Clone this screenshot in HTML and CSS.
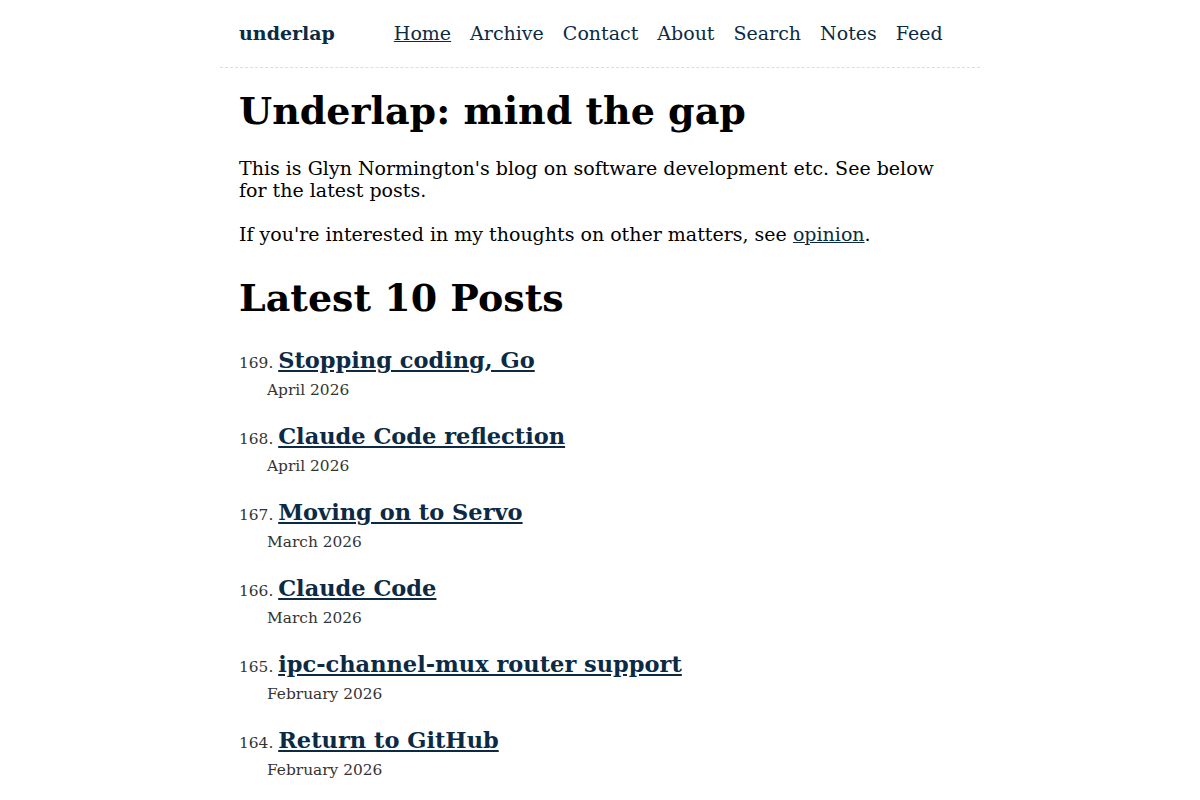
FILE: index.html
```html
<!DOCTYPE html>
<html lang="en">
<head>
    <meta charset="UTF-8">
    <meta name="viewport" content="width=device-width, initial-scale=1.0">
    <title>Underlap: mind the gap</title>
    <link rel="stylesheet" href="styles.css">
</head>
<body>
    <div class="page">
        <header class="site-header">
            <a class="brand" href="#">underlap</a>
            <nav class="site-nav">
                <a class="current" href="#">Home</a>
                <a href="#">Archive</a>
                <a href="#">Contact</a>
                <a href="#">About</a>
                <a href="#">Search</a>
                <a href="#">Notes</a>
                <a href="#">Feed</a>
            </nav>
        </header>

        <main class="content">
            <h1>Underlap: mind the gap</h1>
            <p>This is Glyn Normington's blog on software development etc. See below for the latest posts.</p>
            <p>If you're interested in my thoughts on other matters, see <a href="#">opinion</a>.</p>

            <h2>Latest 10 Posts</h2>
            <ol class="posts" reversed start="169">
                <li>
                    <a class="post-title" href="#">Stopping coding, Go</a>
                    <div class="post-date">April 2026</div>
                </li>
                <li>
                    <a class="post-title" href="#">Claude Code reflection</a>
                    <div class="post-date">April 2026</div>
                </li>
                <li>
                    <a class="post-title" href="#">Moving on to Servo</a>
                    <div class="post-date">March 2026</div>
                </li>
                <li>
                    <a class="post-title" href="#">Claude Code</a>
                    <div class="post-date">March 2026</div>
                </li>
                <li>
                    <a class="post-title" href="#">ipc-channel-mux router support</a>
                    <div class="post-date">February 2026</div>
                </li>
                <li>
                    <a class="post-title" href="#">Return to GitHub</a>
                    <div class="post-date">February 2026</div>
                </li>
            </ol>
        </main>
    </div>
</body>
</html>
```

FILE: styles.css
```css
body {
    margin: 0;
    font-family: "DejaVu Serif", serif;
    font-size: 19px;
    color: #000;
    background: #fff;
}

a {
    color: #0c2a44;
}

.page {
    max-width: 760px;
    margin: 0 auto;
}

/* Site header */
.site-header {
    display: flex;
    align-items: baseline;
    padding: 22px 19px 23px;
    border-bottom: 1px dashed #ddd;
}

.brand {
    font-weight: bold;
    text-decoration: none;
}

.site-nav {
    display: flex;
    gap: 19px;
    margin-left: 59px;
}

.site-nav a {
    text-decoration: none;
}

.site-nav a.current {
    text-decoration: underline;
}

/* Main content */
.content {
    padding: 0 19px;
}

h1 {
    font-size: 38px;
    margin: 20px 0 24px;
}

p {
    margin: 0 0 22px;
}

h2 {
    font-size: 38px;
    margin: 30px 0 27px;
}

/* Post list */
.posts {
    list-style-position: inside;
    padding: 0;
    margin: 0;
    font-size: 15.4px;
    color: #333;
}

.posts li {
    margin-bottom: 24px;
}

.post-title {
    font-size: 22.5px;
    font-weight: bold;
}

.post-date {
    margin: 8px 0 0 28px;
}
```
